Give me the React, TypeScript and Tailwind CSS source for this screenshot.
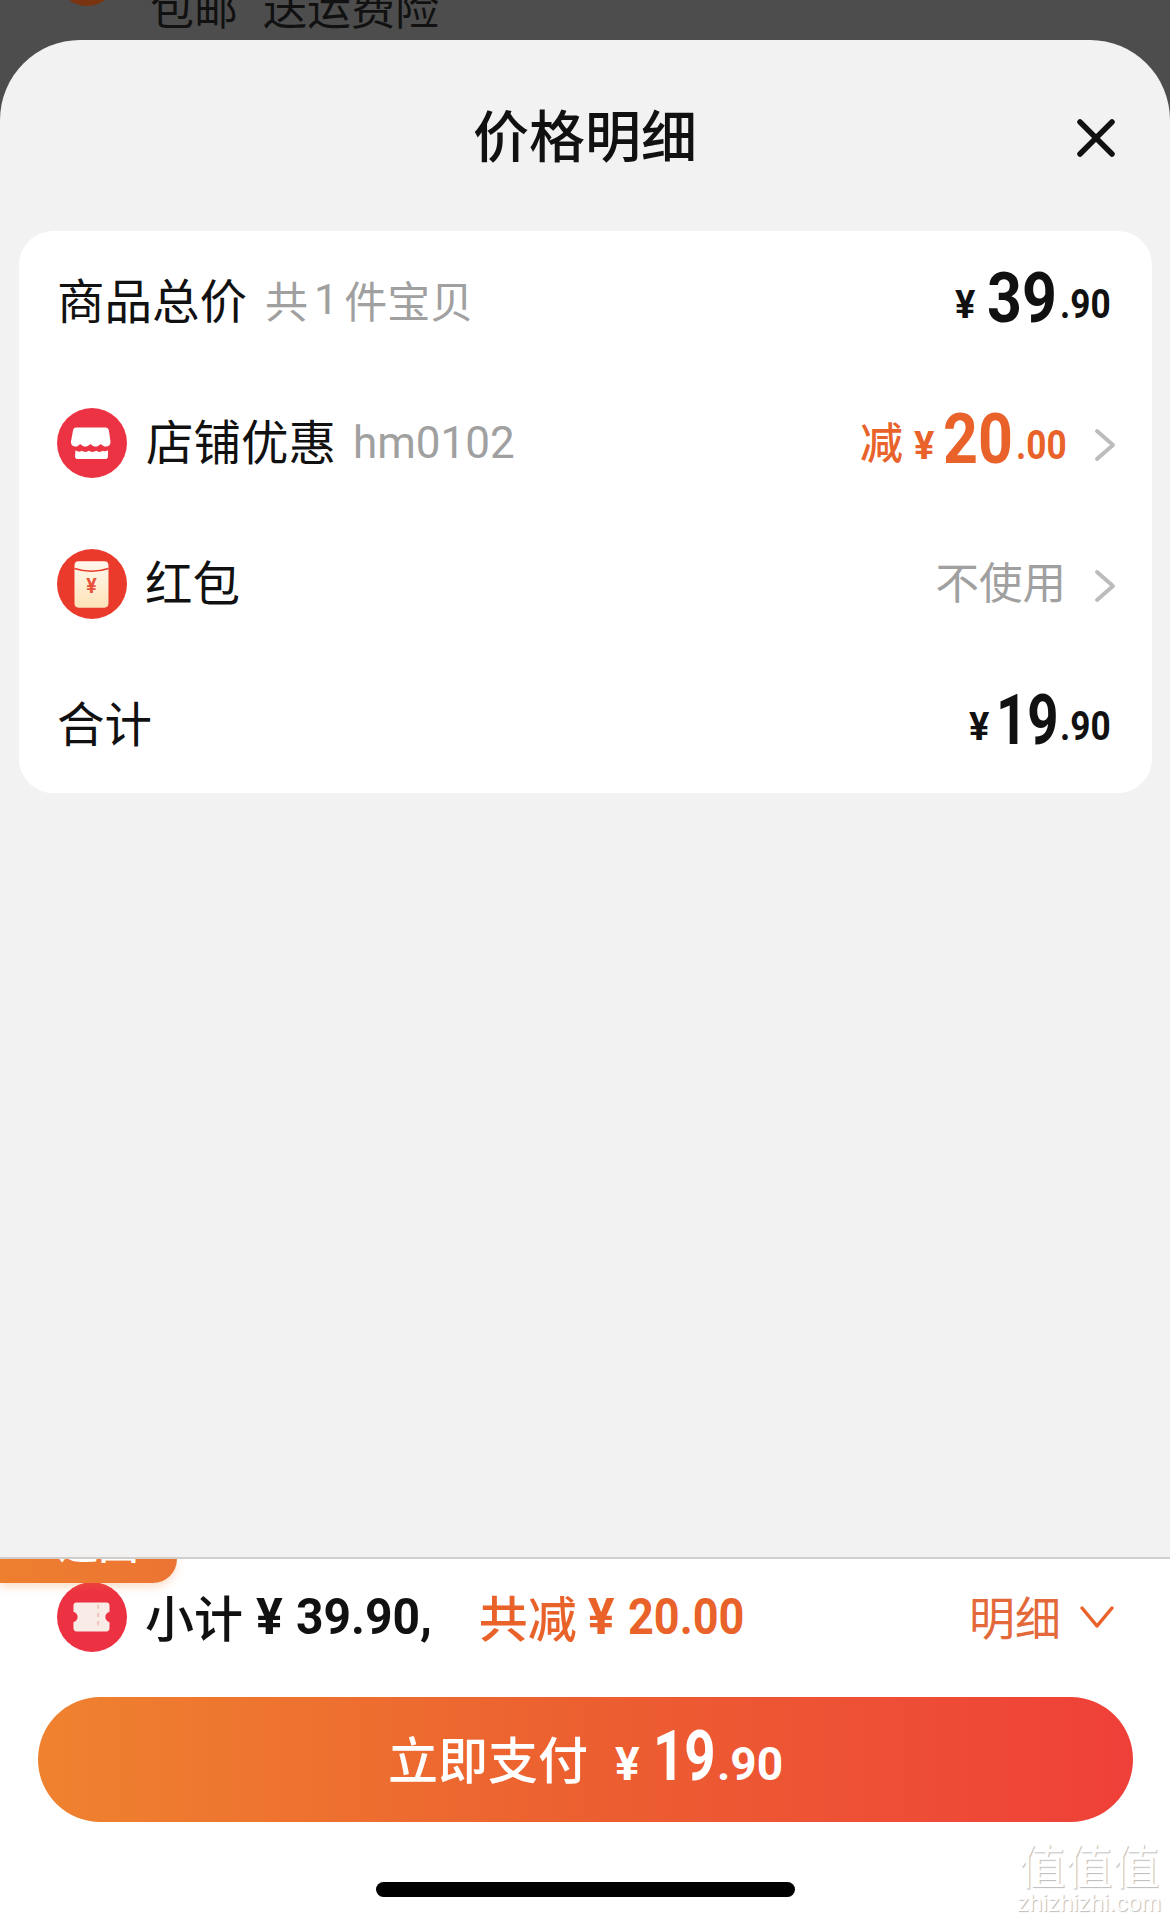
const NUM_FONT = "font-['Roboto',sans-serif]";
const SQUEEZED = "block origin-left whitespace-nowrap leading-none";

function ShopIcon() {
  return (
    <svg viewBox="0 0 68 68" className="h-[70px] w-[70px] shrink-0">
      <circle cx="34" cy="34" r="34" fill="#ec3344" />
      <path
        d="M21 19h26c2 0 3 1 3.500 3l1.500 11c0 3-2 4.500-4.500 4.500-2 0-3.500-1-5-2.500-1.500 1.500-3 2.500-5 2.500s-3.500-1-5-2.500c-1.500 1.500-3 2.500-5 2.500s-3.500-1-5-2.500c-1.500 1.500-2.500 2.500-4.500 2.500-2.500 0-4.500-1.500-4.500-4.500l2-11c.5-2 1.500-3 3-3z"
        fill="#fff"
      />
      <path
        d="M18 41c2 1.500 4 2 6 .5 2 1.500 5 1.500 7 0 2 1.500 5 1.500 7 0 2 1.500 4.500 1.500 6.500 0 1.500 1 3 .5 5-.5V47c0 1.500-1 2.500-2.500 2.500h-27c-1.500 0-2.500-1-2.500-2.500z"
        fill="#fff"
      />
    </svg>
  );
}

function EnvelopeIcon() {
  return (
    <svg viewBox="0 0 68 68" className="h-[70px] w-[70px] shrink-0">
      <defs>
        <linearGradient id="envelope" x1="0" y1="0" x2="0" y2="1">
          <stop offset="0" stopColor="#fff8ee" />
          <stop offset="1" stopColor="#fde3b8" />
        </linearGradient>
      </defs>
      <circle cx="34" cy="34" r="34" fill="#e93a2b" />
      <rect x="17" y="12" width="33" height="45" rx="4" fill="url(#envelope)" />
      <path d="M17 19c10 3.500 23 3.500 33 0" fill="none" stroke="#e93a2b" strokeWidth="1.500" />
      <text x="33.500" y="43" textAnchor="middle" fontSize="19" fontWeight="700" fill="#e8503a" fontFamily="Roboto">
        ¥
      </text>
    </svg>
  );
}

function TicketIcon() {
  return (
    <svg viewBox="0 0 68 68" className="h-[70px] w-[70px] shrink-0">
      <circle cx="34" cy="34" r="34" fill="#ec3242" />
      <path
        d="M19 20h29c2 0 3 1 3 3v6c-3 1-4 3-4 5s1 4 4 5v6c0 2-1 3-3 3H19c-2 0-3-1-3-3v-6c3-1 4-3 4-5s-1-4-4-5v-6c0-2 1-3 3-3z"
        fill="#f9ece6"
      />
      <path d="M40 22v24" stroke="#eec4bb" strokeWidth="2" strokeDasharray="4 4" />
    </svg>
  );
}

function Chevron() {
  return (
    <svg viewBox="0 0 22 34" className="ml-[28px] mt-[5px] h-[34px] w-[22px] shrink-0" fill="none" stroke="#bcbcbc" strokeWidth="4" strokeLinecap="round" strokeLinejoin="round">
      <path d="M3 3l16 14L3 31" />
    </svg>
  );
}

function Price({ int, dec, color, intClass }: { int: string; dec: string; color: string; intClass: string }) {
  return (
    <div className={`flex -translate-y-[4px] items-baseline font-bold ${NUM_FONT} ${color}`}>
      <span className={`${SQUEEZED} mr-[8px] w-[24px] -translate-y-[4px] text-[38px]`}>¥</span>
      <span className={`${SQUEEZED} text-[70px] ${intClass}`}>{int}</span>
      <span className={`${SQUEEZED} ml-[4px] w-[50px] -translate-y-[4px] text-[40px] scale-x-[.88]`}>.{dec}</span>
    </div>
  );
}

export default function App() {
  return (
    <div className="flex h-[1921px] w-[1170px] flex-col overflow-hidden bg-[#4d4d4d] font-['Noto_Sans_CJK_SC',sans-serif]">
      {/* 弹层后面露出来的一点内容 */}
      <div className="flex h-[40px] shrink-0 overflow-hidden text-[#111]">
        <div className="ml-[57px] mt-[-54px] h-[60px] w-[60px] rounded-full bg-[#7a3410]" />
        <div className="ml-[33px] mt-[-22px] flex gap-[25px] text-[44px] leading-[56px]">
          <span>包邮</span>
          <span>送运费险</span>
        </div>
      </div>

      <div className="flex flex-1 flex-col rounded-t-[80px] bg-[#f2f2f2]">
        <div className="grid h-[191px] shrink-0 grid-cols-[1fr_auto_1fr] items-center">
          <div />
          <h1 className="pb-[6px] text-[56px] font-medium leading-none text-[#111]">价格明细</h1>
          <div className="flex justify-end pr-[55px] pt-[5px]">
            <svg viewBox="0 0 38 38" className="h-[38px] w-[38px]" fill="none" stroke="#111" strokeWidth="5.500" strokeLinecap="round">
              <path d="M3 3l32 32M35 3L3 35" />
            </svg>
          </div>
        </div>

        <div className="ml-[19px] mr-[18px] rounded-[34px] bg-white pl-[38px] pr-[36px] text-[47.5px] leading-none text-[#111]">
          <div className="flex h-[141px] items-center justify-between pr-[6px]">
            <div className="flex items-center pb-[5px]">
              <span>商品总价</span>
              <span className="ml-[18px] flex items-center text-[43px] text-[#a0a0a0]">
                共<span className="mx-[6px] font-['Roboto',sans-serif]">1</span>件宝贝
              </span>
            </div>
            <Price int="39" dec="90" color="text-[#111]" intClass="w-[69px] scale-x-[.87]" />
          </div>

          <div className="flex h-[141px] items-center justify-between">
            <div className="flex items-center">
              <ShopIcon />
              <span className="ml-[19px] pb-[5px]">店铺优惠</span>
              <span className={`ml-[17px] ${NUM_FONT} text-[44px] text-[#a0a0a0]`}>hm0102</span>
            </div>
            <div className="flex items-center">
              <div className="flex items-center text-[#e8622a]">
                <span className="mr-[11px] pb-[5px] text-[43px] font-medium leading-none">减</span>
                <Price int="20" dec="00" color="text-[#e8622a]" intClass="-ml-[3px] w-[69px] scale-x-[.87]" />
              </div>
              <Chevron />
            </div>
          </div>

          <div className="flex h-[141px] items-center justify-between">
            <div className="flex items-center">
              <EnvelopeIcon />
              <span className="ml-[18px] pb-[5px]">红包</span>
            </div>
            <div className="flex items-center">
              <span className="pb-[5px] text-[43.5px] text-[#a0a0a0]">不使用</span>
              <Chevron />
            </div>
          </div>

          <div className="flex h-[139px] items-center justify-between pr-[6px]">
            <span className="pb-[3px]">合计</span>
            <Price int="19" dec="90" color="text-[#111]" intClass="-ml-[5px] w-[60px] scale-x-[.78]" />
          </div>
        </div>

        <div className="flex-1" />

        <div className="relative h-[364px] shrink-0 border-t-2 border-[#d0d0d0] bg-white">
          <div className="absolute left-0 top-0 flex h-[24px] w-[177px] justify-center overflow-hidden rounded-br-[30px] bg-gradient-to-r from-[#ee7f2f] to-[#ec7433] shadow-[0_4px_8px_rgba(238,127,47,0.25)]">
            <span className="mt-[-41px] pl-[20px] text-[40px] font-medium leading-[48px] text-white">返回</span>
          </div>

          <div className="flex h-[138px] items-start justify-between pl-[57px] pr-[55px] pt-[23px] text-[49px] leading-none">
            <div className="flex items-center">
              <TicketIcon />
              <span className="ml-[18px] pb-[4px] font-medium text-[#111]">小计</span>
              <span className={`ml-[13px] font-bold text-[#111] ${NUM_FONT} text-[50px]`}>¥</span>
              <span className={`ml-[13px] w-[137px] origin-left whitespace-nowrap font-bold text-[#111] ${NUM_FONT} text-[50px] scale-x-[.96]`}>39.90,</span>
              <span className="ml-[46px] pb-[4px] font-medium text-[#e8622a]">共减</span>
              <span className={`ml-[11px] font-bold text-[#e8622a] ${NUM_FONT} text-[50px]`}>¥</span>
              <span className={`ml-[13px] w-[118px] origin-left whitespace-nowrap font-bold text-[#e8622a] ${NUM_FONT} text-[50px] scale-x-[.9]`}>20.00</span>
            </div>
            <div className="flex h-[70px] items-center text-[#e4693a]">
              <span className="pb-[5px] text-[46px]">明细</span>
              <svg viewBox="0 0 36 24" className="ml-[18px] h-[24px] w-[36px]" fill="none" stroke="#e8622a" strokeWidth="3.500" strokeLinecap="round" strokeLinejoin="round">
                <path d="M3 3l15 18L33 3" />
              </svg>
            </div>
          </div>

          <div className="ml-[38px] mr-[37px] flex h-[125px] items-center justify-center rounded-full bg-gradient-to-r from-[#ef822f] via-[#ec5f30] to-[#ef3f39] text-white">
            <span className="mr-[27px] pb-[6px] text-[50px] font-medium leading-none">立即支付</span>
            <div className={`flex -translate-y-[4px] items-baseline font-bold ${NUM_FONT}`}>
              <span className={`${SQUEEZED} mr-[12px] w-[26px] text-[46px]`}>¥</span>
              <span className={`${SQUEEZED} w-[60px] text-[70px] scale-x-[.78]`}>19</span>
              <span className={`${SQUEEZED} ml-[4px] w-[66px] text-[46px]`}>.90</span>
            </div>
          </div>

          <div className="mx-auto mt-[60px] h-[15px] w-[419px] rounded-full bg-black" />

          {/* 水印 */}
          <div className="absolute bottom-[6px] right-[9px] flex flex-col items-center text-white [text-shadow:1px_1px_1px_#bbb]">
            <span className="text-[47px] leading-[54px]">值值值</span>
            <span className="font-['Liberation_Sans',sans-serif] text-[24px] leading-[24px]">zhizhizhi.com</span>
          </div>
        </div>
      </div>
    </div>
  );
}
